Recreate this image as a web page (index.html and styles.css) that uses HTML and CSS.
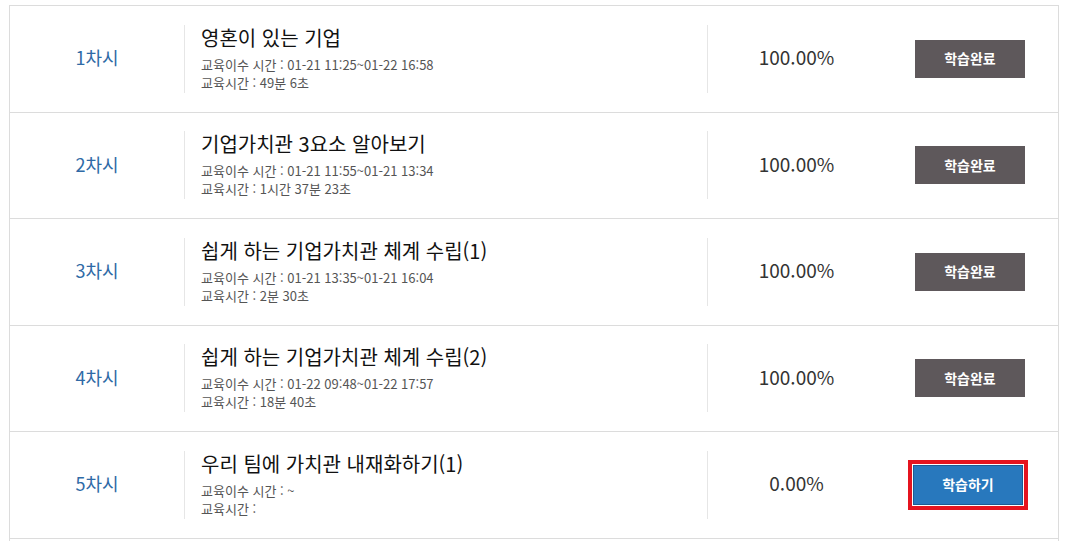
FILE: index.html
```html
<!DOCTYPE html>
<html lang="ko">
<head>
<meta charset="utf-8">
<title>차시 목록</title>
<link rel="stylesheet" href="styles.css">
</head>
<body>
<div class="list">
  <div class="row">
    <div class="session">1차시</div>
    <div class="info">
      <div class="title">영혼이 있는 기업</div>
      <div class="sub">교육이수 시간 : 01-21 11:25~01-22 16:58</div>
      <div class="sub">교육시간 : 49분 6초</div>
    </div>
    <div class="rate">100.00%</div>
    <div class="action"><span class="btn done">학습완료</span></div>
  </div>
  <div class="row">
    <div class="session">2차시</div>
    <div class="info">
      <div class="title">기업가치관 3요소 알아보기</div>
      <div class="sub">교육이수 시간 : 01-21 11:55~01-21 13:34</div>
      <div class="sub">교육시간 : 1시간 37분 23초</div>
    </div>
    <div class="rate">100.00%</div>
    <div class="action"><span class="btn done">학습완료</span></div>
  </div>
  <div class="row">
    <div class="session">3차시</div>
    <div class="info">
      <div class="title">쉽게 하는 기업가치관 체계 수립(1)</div>
      <div class="sub">교육이수 시간 : 01-21 13:35~01-21 16:04</div>
      <div class="sub">교육시간 : 2분 30초</div>
    </div>
    <div class="rate">100.00%</div>
    <div class="action"><span class="btn done">학습완료</span></div>
  </div>
  <div class="row">
    <div class="session">4차시</div>
    <div class="info">
      <div class="title">쉽게 하는 기업가치관 체계 수립(2)</div>
      <div class="sub">교육이수 시간 : 01-22 09:48~01-22 17:57</div>
      <div class="sub">교육시간 : 18분 40초</div>
    </div>
    <div class="rate">100.00%</div>
    <div class="action"><span class="btn done">학습완료</span></div>
  </div>
  <div class="row">
    <div class="session">5차시</div>
    <div class="info">
      <div class="title">우리 팀에 가치관 내재화하기(1)</div>
      <div class="sub">교육이수 시간 : ~</div>
      <div class="sub">교육시간 : </div>
    </div>
    <div class="rate">0.00%</div>
    <div class="action"><span class="highlight"><span class="btn go">학습하기</span></span></div>
  </div>
  <div class="row-more"></div>
</div>
</body>
</html>
```

FILE: styles.css
```css
html, body {
  margin: 0;
  padding: 0;
  background: #fff;
  overflow: hidden;
}
body {
  font-family: "Noto Sans CJK KR", "Noto Sans", sans-serif;
  color: #222;
  padding: 5px 0 0 9px;
}
.list {
  width: 1050px;
  box-sizing: border-box;
  border: 1px solid #dcdcdc;
  border-bottom: none;
}
.row {
  display: flex;
  align-items: center;
  height: 106.5px;
  box-sizing: border-box;
  border-bottom: 1px solid #dcdcdc;
}
.row-more {
  height: 40px;
}
.session {
  width: 174px;
  text-align: center;
  font-size: 18px;
  color: #2f6aa6;
  padding-bottom: 3px;
}
.info {
  width: 523px;
  height: 68px;
  box-sizing: border-box;
  border-left: 1px solid #e6e6e6;
  padding-left: 16px;
}
.title {
  font-size: 20px;
  line-height: 26px;
  margin-bottom: 5px;
  color: #111;
  white-space: nowrap;
}
.sub {
  font-size: 13px;
  line-height: 18px;
  color: #555;
  white-space: pre;
}
.rate {
  width: 178px;
  height: 68px;
  box-sizing: border-box;
  border-left: 1px solid #e6e6e6;
  display: flex;
  align-items: center;
  justify-content: center;
  font-size: 19px;
  color: #333;
  padding-bottom: 4px;
}
.action {
  flex: 1;
  padding-left: 30px;
  display: flex;
  align-items: center;
}
.btn {
  display: flex;
  align-items: center;
  justify-content: center;
  width: 110px;
  height: 38px;
  box-sizing: border-box;
  color: #fff;
  font-size: 14px;
  font-weight: bold;
  padding-bottom: 1px;
}
.btn.done {
  background: #5e585b;
}
.btn.go {
  background: #2878bd;
  border: 1px solid #1c5c92;
  height: 40px;
}
.highlight {
  display: inline-block;
  margin-left: -7px;
  padding: 1px;
  background: #fff;
  border: 4.5px solid #e5141f;
}
```
